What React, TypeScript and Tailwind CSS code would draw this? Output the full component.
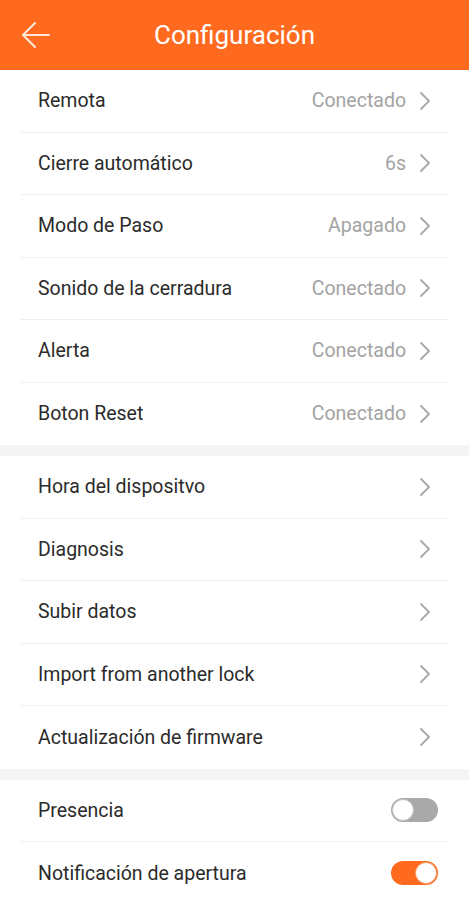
import React from 'react';

const Chevron = () => (
    <svg width="14" height="20" viewBox="0 0 14 20" fill="none" className="ml-3 shrink-0">
        <path d="M3 2l8 8-8 8" stroke="#a8a8a8" strokeWidth="1.8" strokeLinecap="round" strokeLinejoin="round" />
    </svg>
);

const Row = ({ label, value, last, children }: { label: string; value?: string; last?: boolean; children?: React.ReactNode }) => (
    <div className={`mx-5 h-[62.5px] flex items-center justify-between pl-[18px] pr-[17px] ${last ? '' : 'border-b border-[#f0f0f0]'}`}>
        <span className="text-[19.5px] text-[#2b2b2b]">{label}</span>
        {children ?? (
            <div className="flex items-center">
                {value && <span className="text-[19.5px] text-[#a3a3a3]">{value}</span>}
                <Chevron />
            </div>
        )}
    </div>
);

const Toggle = ({ on }: { on?: boolean }) => (
    <div className={`w-[47px] h-[24px] rounded-full flex items-center p-[1px] mr-[-6px] ${on ? 'bg-[#ff6a1f] justify-end' : 'bg-[#a9a9a9] justify-start'}`}>
        <div className={`w-[22px] h-[22px] rounded-full bg-white border ${on ? 'border-[#f5a070]' : 'border-[#c4c4c4]'}`} />
    </div>
);

const App = () => {
    return (
        <div className="w-[469px] h-[900px] bg-white overflow-hidden font-['Roboto',sans-serif]">
            <header className="h-[70px] bg-[#ff6a1f] flex items-center relative">
                <svg width="30" height="28" viewBox="0 0 30 28" fill="none" className="absolute left-[21px] top-[21px]">
                    <path d="M28 14H3M14 2L2 14l12 12" stroke="#fde7d8" strokeWidth="2" strokeLinecap="round" strokeLinejoin="round" />
                </svg>
                <h1 className="w-full text-center text-white text-[26px] font-normal">Configuración</h1>
            </header>
            <section>
                <Row label="Remota" value="Conectado" />
                <Row label="Cierre automático" value="6s" />
                <Row label="Modo de Paso" value="Apagado" />
                <Row label="Sonido de la cerradura" value="Conectado" />
                <Row label="Alerta" value="Conectado" />
                <Row label="Boton Reset" value="Conectado" last />
            </section>
            <div className="h-[11px] bg-[#f4f4f4]" />
            <section>
                <Row label="Hora del dispositvo" />
                <Row label="Diagnosis" />
                <Row label="Subir datos" />
                <Row label="Import from another lock" />
                <Row label="Actualización de firmware" last />
            </section>
            <div className="h-[11px] bg-[#f4f4f4]" />
            <section>
                <Row label="Presencia"><Toggle /></Row>
                <Row label="Notificación de apertura" last><Toggle on /></Row>
            </section>
        </div>
    );
};

export default App;
